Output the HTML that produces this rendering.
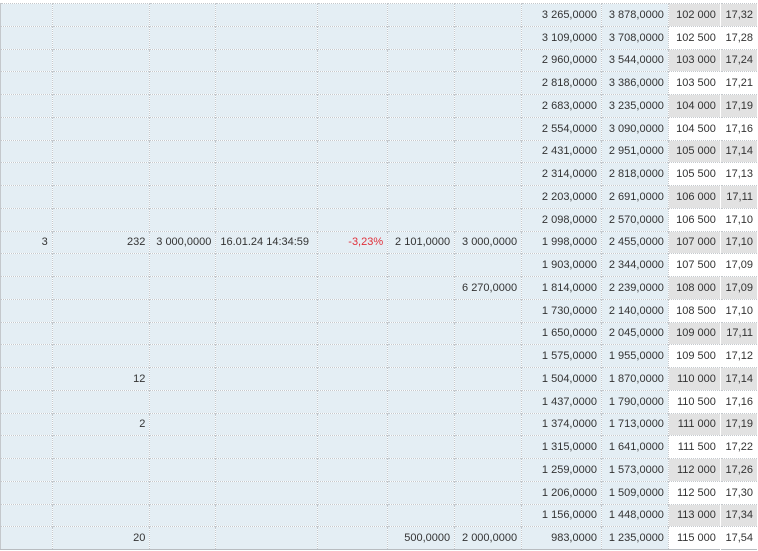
<!DOCTYPE html>
<html><head><meta charset="utf-8"><style>
html,body{margin:0;padding:0;background:#fff;width:758px;height:551px;overflow:hidden}
table{position:absolute;left:0;top:3px;border-collapse:collapse;table-layout:fixed;font-family:"Liberation Sans",sans-serif;font-size:11px;color:#333;border-left:1px solid #c4c8cc;border-bottom:1px solid #b8bcc0}
td{height:22.75px;box-sizing:border-box;padding:0 4px;border-right:1px dotted #c4c8cc;border-top:1px dotted #c4c8cc;background:#e4eef4;text-align:right;white-space:nowrap;overflow:hidden}
td.l{text-align:left}
td.r{color:#e0303a}
tr:nth-child(odd) td.g{background:#e2e2e2}
tr:nth-child(even) td.g{background:#fff}
td.g{border-right:1px solid #fff}
</style></head><body>
<table>
<colgroup><col style="width:52px"><col style="width:98px"><col style="width:66px"><col style="width:102px"><col style="width:70px"><col style="width:67px"><col style="width:67px"><col style="width:80px"><col style="width:67px"><col style="width:52px"><col style="width:37px"></colgroup>
<tr><td></td><td></td><td></td><td></td><td></td><td></td><td></td><td>3 265,0000</td><td>3 878,0000</td><td class="g">102 000</td><td class="g">17,32</td></tr>
<tr><td></td><td></td><td></td><td></td><td></td><td></td><td></td><td>3 109,0000</td><td>3 708,0000</td><td class="g">102 500</td><td class="g">17,28</td></tr>
<tr><td></td><td></td><td></td><td></td><td></td><td></td><td></td><td>2 960,0000</td><td>3 544,0000</td><td class="g">103 000</td><td class="g">17,24</td></tr>
<tr><td></td><td></td><td></td><td></td><td></td><td></td><td></td><td>2 818,0000</td><td>3 386,0000</td><td class="g">103 500</td><td class="g">17,21</td></tr>
<tr><td></td><td></td><td></td><td></td><td></td><td></td><td></td><td>2 683,0000</td><td>3 235,0000</td><td class="g">104 000</td><td class="g">17,19</td></tr>
<tr><td></td><td></td><td></td><td></td><td></td><td></td><td></td><td>2 554,0000</td><td>3 090,0000</td><td class="g">104 500</td><td class="g">17,16</td></tr>
<tr><td></td><td></td><td></td><td></td><td></td><td></td><td></td><td>2 431,0000</td><td>2 951,0000</td><td class="g">105 000</td><td class="g">17,14</td></tr>
<tr><td></td><td></td><td></td><td></td><td></td><td></td><td></td><td>2 314,0000</td><td>2 818,0000</td><td class="g">105 500</td><td class="g">17,13</td></tr>
<tr><td></td><td></td><td></td><td></td><td></td><td></td><td></td><td>2 203,0000</td><td>2 691,0000</td><td class="g">106 000</td><td class="g">17,11</td></tr>
<tr><td></td><td></td><td></td><td></td><td></td><td></td><td></td><td>2 098,0000</td><td>2 570,0000</td><td class="g">106 500</td><td class="g">17,10</td></tr>
<tr><td>3</td><td>232</td><td>3 000,0000</td><td class="l">16.01.24 14:34:59</td><td class="r">-3,23%</td><td>2 101,0000</td><td>3 000,0000</td><td>1 998,0000</td><td>2 455,0000</td><td class="g">107 000</td><td class="g">17,10</td></tr>
<tr><td></td><td></td><td></td><td></td><td></td><td></td><td></td><td>1 903,0000</td><td>2 344,0000</td><td class="g">107 500</td><td class="g">17,09</td></tr>
<tr><td></td><td></td><td></td><td></td><td></td><td></td><td>6 270,0000</td><td>1 814,0000</td><td>2 239,0000</td><td class="g">108 000</td><td class="g">17,09</td></tr>
<tr><td></td><td></td><td></td><td></td><td></td><td></td><td></td><td>1 730,0000</td><td>2 140,0000</td><td class="g">108 500</td><td class="g">17,10</td></tr>
<tr><td></td><td></td><td></td><td></td><td></td><td></td><td></td><td>1 650,0000</td><td>2 045,0000</td><td class="g">109 000</td><td class="g">17,11</td></tr>
<tr><td></td><td></td><td></td><td></td><td></td><td></td><td></td><td>1 575,0000</td><td>1 955,0000</td><td class="g">109 500</td><td class="g">17,12</td></tr>
<tr><td></td><td>12</td><td></td><td></td><td></td><td></td><td></td><td>1 504,0000</td><td>1 870,0000</td><td class="g">110 000</td><td class="g">17,14</td></tr>
<tr><td></td><td></td><td></td><td></td><td></td><td></td><td></td><td>1 437,0000</td><td>1 790,0000</td><td class="g">110 500</td><td class="g">17,16</td></tr>
<tr><td></td><td>2</td><td></td><td></td><td></td><td></td><td></td><td>1 374,0000</td><td>1 713,0000</td><td class="g">111 000</td><td class="g">17,19</td></tr>
<tr><td></td><td></td><td></td><td></td><td></td><td></td><td></td><td>1 315,0000</td><td>1 641,0000</td><td class="g">111 500</td><td class="g">17,22</td></tr>
<tr><td></td><td></td><td></td><td></td><td></td><td></td><td></td><td>1 259,0000</td><td>1 573,0000</td><td class="g">112 000</td><td class="g">17,26</td></tr>
<tr><td></td><td></td><td></td><td></td><td></td><td></td><td></td><td>1 206,0000</td><td>1 509,0000</td><td class="g">112 500</td><td class="g">17,30</td></tr>
<tr><td></td><td></td><td></td><td></td><td></td><td></td><td></td><td>1 156,0000</td><td>1 448,0000</td><td class="g">113 000</td><td class="g">17,34</td></tr>
<tr><td></td><td>20</td><td></td><td></td><td></td><td>500,0000</td><td>2 000,0000</td><td>983,0000</td><td>1 235,0000</td><td class="g">115 000</td><td class="g">17,54</td></tr>
</table>
</body></html>
